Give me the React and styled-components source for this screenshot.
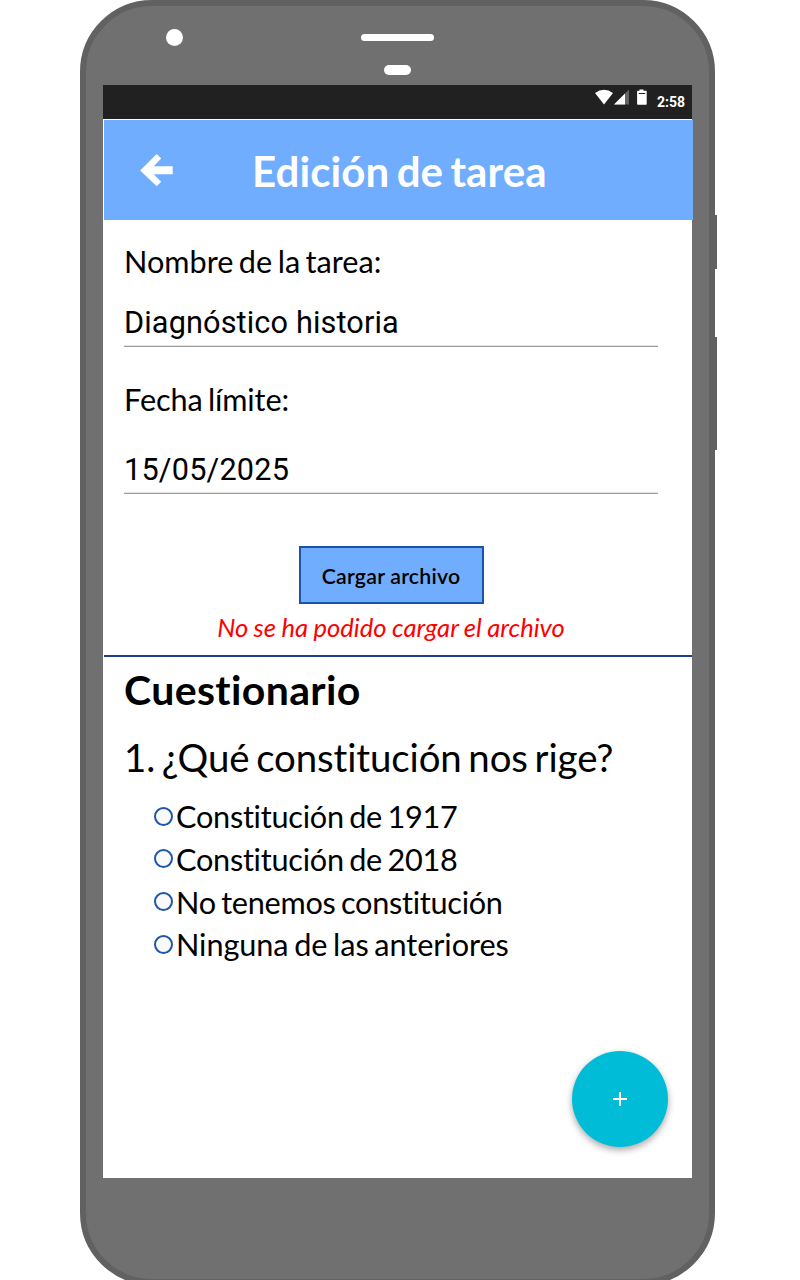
import React from "react";
import styled, { createGlobalStyle } from "styled-components";

const GlobalStyle = createGlobalStyle`
  *, *::before, *::after { box-sizing: border-box; }
  html, body { margin: 0; height: 1280px; overflow: hidden; background: #fff; }
  body {
    font-family: Lato, "Liberation Sans", sans-serif;
    font-variant-ligatures: none;
    color: #000;
  }
  h1, h2, h3, p { margin: 0; }
`;

const Stage = styled.main`
  width: 800px;
  height: 1280px;
  overflow: hidden;
  padding-left: 80px;
`;

const Phone = styled.div`
  position: relative;
  width: 635px;
  height: 1285px;
  border: 6px solid #616161;
  border-radius: 72px;
  background: #707070;
  padding: 0 17px;
`;

const SideKey = styled.span`
  position: absolute;
  right: -8px;
  top: ${(p) => p.$top - 6}px;
  width: 2px;
  height: ${(p) => p.$height}px;
  background: #616161;
`;

const Bezel = styled.div`
  height: 79px;
  display: grid;
  grid-template-columns: 1fr 73px 1fr;
  padding-top: 23px;
`;

const Camera = styled.span`
  width: 17px;
  height: 17px;
  margin-left: 63px;
  border-radius: 50%;
  background: #fff;
`;

const Speakers = styled.div`
  display: flex;
  flex-direction: column;
  align-items: center;
  gap: 24px;
  padding-top: 5px;
`;

const Slot = styled.span`
  width: ${(p) => p.$width}px;
  height: ${(p) => p.$height}px;
  border-radius: 5px;
  background: #fff;
`;

const Screen = styled.div`
  position: relative;
  width: 589px;
  height: 1093px;
  background: #fff;
`;

const StatusBar = styled.div`
  display: flex;
  justify-content: flex-end;
  height: 34px;
  background: #212121;
  padding-right: 7px;
`;

const StatusIcons = styled.svg`
  width: 54px;
  height: 20px;
  margin-right: 8px;
`;

const Clock = styled.span`
  font: 700 14px/34px Roboto, sans-serif;
  color: #fff;
`;

const Header = styled.header`
  display: flex;
  align-items: center;
  width: 589px;
  height: 100px;
  margin: 1px 0 0 1px;
  padding-left: 36px;
  background: #70adff;
`;

const BackIcon = styled.svg`
  width: 34px;
  height: 34px;
  margin-right: 78px;
`;

const Title = styled.h1`
  font-size: 42px;
  line-height: 50px;
  font-weight: 700;
  letter-spacing: 0.1px;
  word-spacing: -3px;
  padding-top: 2px;
  color: #fff;
  white-space: nowrap;
`;

const Form = styled.section`
  padding: 22px 34px 0 21px;
`;

const Label = styled.label`
  display: block;
  font-size: 30.67px;
  line-height: 40px;
  letter-spacing: ${(p) => p.$spacing || 0}px;
  word-spacing: -2.4px;
  margin-top: ${(p) => p.$gap || 0}px;
`;

const Value = styled.div`
  height: ${(p) => p.$height}px;
  display: flex;
  align-items: flex-end;
  padding-bottom: 2px;
  border-bottom: 1px solid #9e9e9e;
  box-shadow: inset 0 -1px #e4e4e4;
  font: 400 30.67px/42px Roboto, sans-serif;
  letter-spacing: ${(p) => p.$spacing || 0}px;
`;

const Upload = styled.div`
  display: flex;
  flex-direction: column;
  align-items: center;
  padding-top: 52px;
`;

const UploadButton = styled.button`
  width: 185px;
  height: 58px;
  padding: 2px 0 0;
  border: 2px solid #1b53a5;
  background: #70adff;
  font: 600 21.3px/26px Lato, sans-serif;
  letter-spacing: 0.2px;
  color: #000;
`;

const ErrorText = styled.p`
  font-size: 25.6px;
  line-height: 32px;
  font-style: italic;
  word-spacing: -0.6px;
  color: #f00;
  margin-top: 7px;
`;

const Quiz = styled.section`
  margin: 12px 0 0 1px;
  border-top: 2px solid #1f3d8a;
  padding: 8px 0 0 20px;
`;

const QuizTitle = styled.h2`
  font-size: 41px;
  line-height: 50px;
  font-weight: 700;
  letter-spacing: 0.37px;
`;

const Question = styled.h3`
  font-size: 38.4px;
  line-height: 48px;
  font-weight: 400;
  letter-spacing: -0.1px;
  word-spacing: -3px;
  margin-top: 18px;
`;

const Options = styled.div`
  padding: 14.5px 0 0 30px;
`;

const Option = styled.label`
  display: flex;
  align-items: center;
  height: 42.67px;
  font-size: 30.67px;
  letter-spacing: ${(p) => p.$spacing}px;
  word-spacing: -2.1px;
  white-space: nowrap;
`;

const Radio = styled.span`
  width: 19px;
  height: 19px;
  margin: 0 3px 1px 0;
  border: 2px solid #1f57a8;
  border-radius: 50%;
  background: #fafafa;
`;

const AddButton = styled.button`
  position: absolute;
  right: 24px;
  bottom: 31px;
  display: flex;
  align-items: center;
  justify-content: center;
  width: 96px;
  height: 96px;
  padding: 0;
  border: 0;
  border-radius: 50%;
  background: #00bcd7;
  box-shadow: 0 3px 7px rgba(0, 0, 0, 0.35);
`;

const options = [
  { text: "Constitución de 1917", spacing: -0.26 },
  { text: "Constitución de 2018", spacing: -0.26 },
  { text: "No tenemos constitución", spacing: -0.28 },
  { text: "Ninguna de las anteriores", spacing: -0.07 },
];

export default function App() {
  return (
    <Stage>
      <GlobalStyle />
      <Phone>
        <SideKey $top={215} $height={54} />
        <SideKey $top={337} $height={113} />
        <Bezel>
          <Camera />
          <Speakers>
            <Slot $width={73} $height={7} />
            <Slot $width={27} $height={10} />
          </Speakers>
        </Bezel>
        <Screen>
          <StatusBar>
            <StatusIcons viewBox="0 0 54 20" fill="#fff">
              <path d="M0 8Q9 1.5 18 8L9 19.5z" />
              <path d="M34 4.500v15H19z" opacity=".3" />
              <path d="M30 8.500v11H19z" />
              <path d="M44.500 4.500h4v1.300h2.500q.7 0 .7.7V19q0 .7-.7.7H42.800q-.7 0-.7-.7V6.500q0-.7.7-.7h1.700z" />
              <path d="M43.8 8.5h6.4" stroke="#212121" />
            </StatusIcons>
            <Clock>2:58</Clock>
          </StatusBar>
          <Header>
            <BackIcon viewBox="0 0 34 34" fill="#fff">
              <path d="M.2 17.400L16.700 1l4.500 4.500-7.500 7.700H32.700v8H13.700l7.500 7.600-4.500 4.500z" />
            </BackIcon>
            <Title>Edición de tarea</Title>
          </Header>
          <Form>
            <Label>Nombre de la tarea:</Label>
            <Value $height={65} $spacing={0.13}>Diagnóstico historia</Value>
            <Label $gap={33} $spacing={-0.12}>Fecha límite:</Label>
            <Value $height={74} $spacing={0.2}>15/05/2025</Value>
            <Upload>
              <UploadButton>Cargar archivo</UploadButton>
              <ErrorText>No se ha podido cargar el archivo</ErrorText>
            </Upload>
          </Form>
          <Quiz>
            <QuizTitle>Cuestionario</QuizTitle>
            <Question>1. ¿Qué constitución nos rige?</Question>
            <Options>
              {options.map(({ text, spacing }) => (
                <Option key={text} $spacing={spacing}>
                  <Radio />
                  {text}
                </Option>
              ))}
            </Options>
          </Quiz>
          <AddButton aria-label="Agregar">
            <svg width="14" height="14" viewBox="0 0 14 14" fill="#fff">
              <path d="M6 0h2v6h6v2H8v6H6V8H0V6h6z" />
            </svg>
          </AddButton>
        </Screen>
      </Phone>
    </Stage>
  );
}
